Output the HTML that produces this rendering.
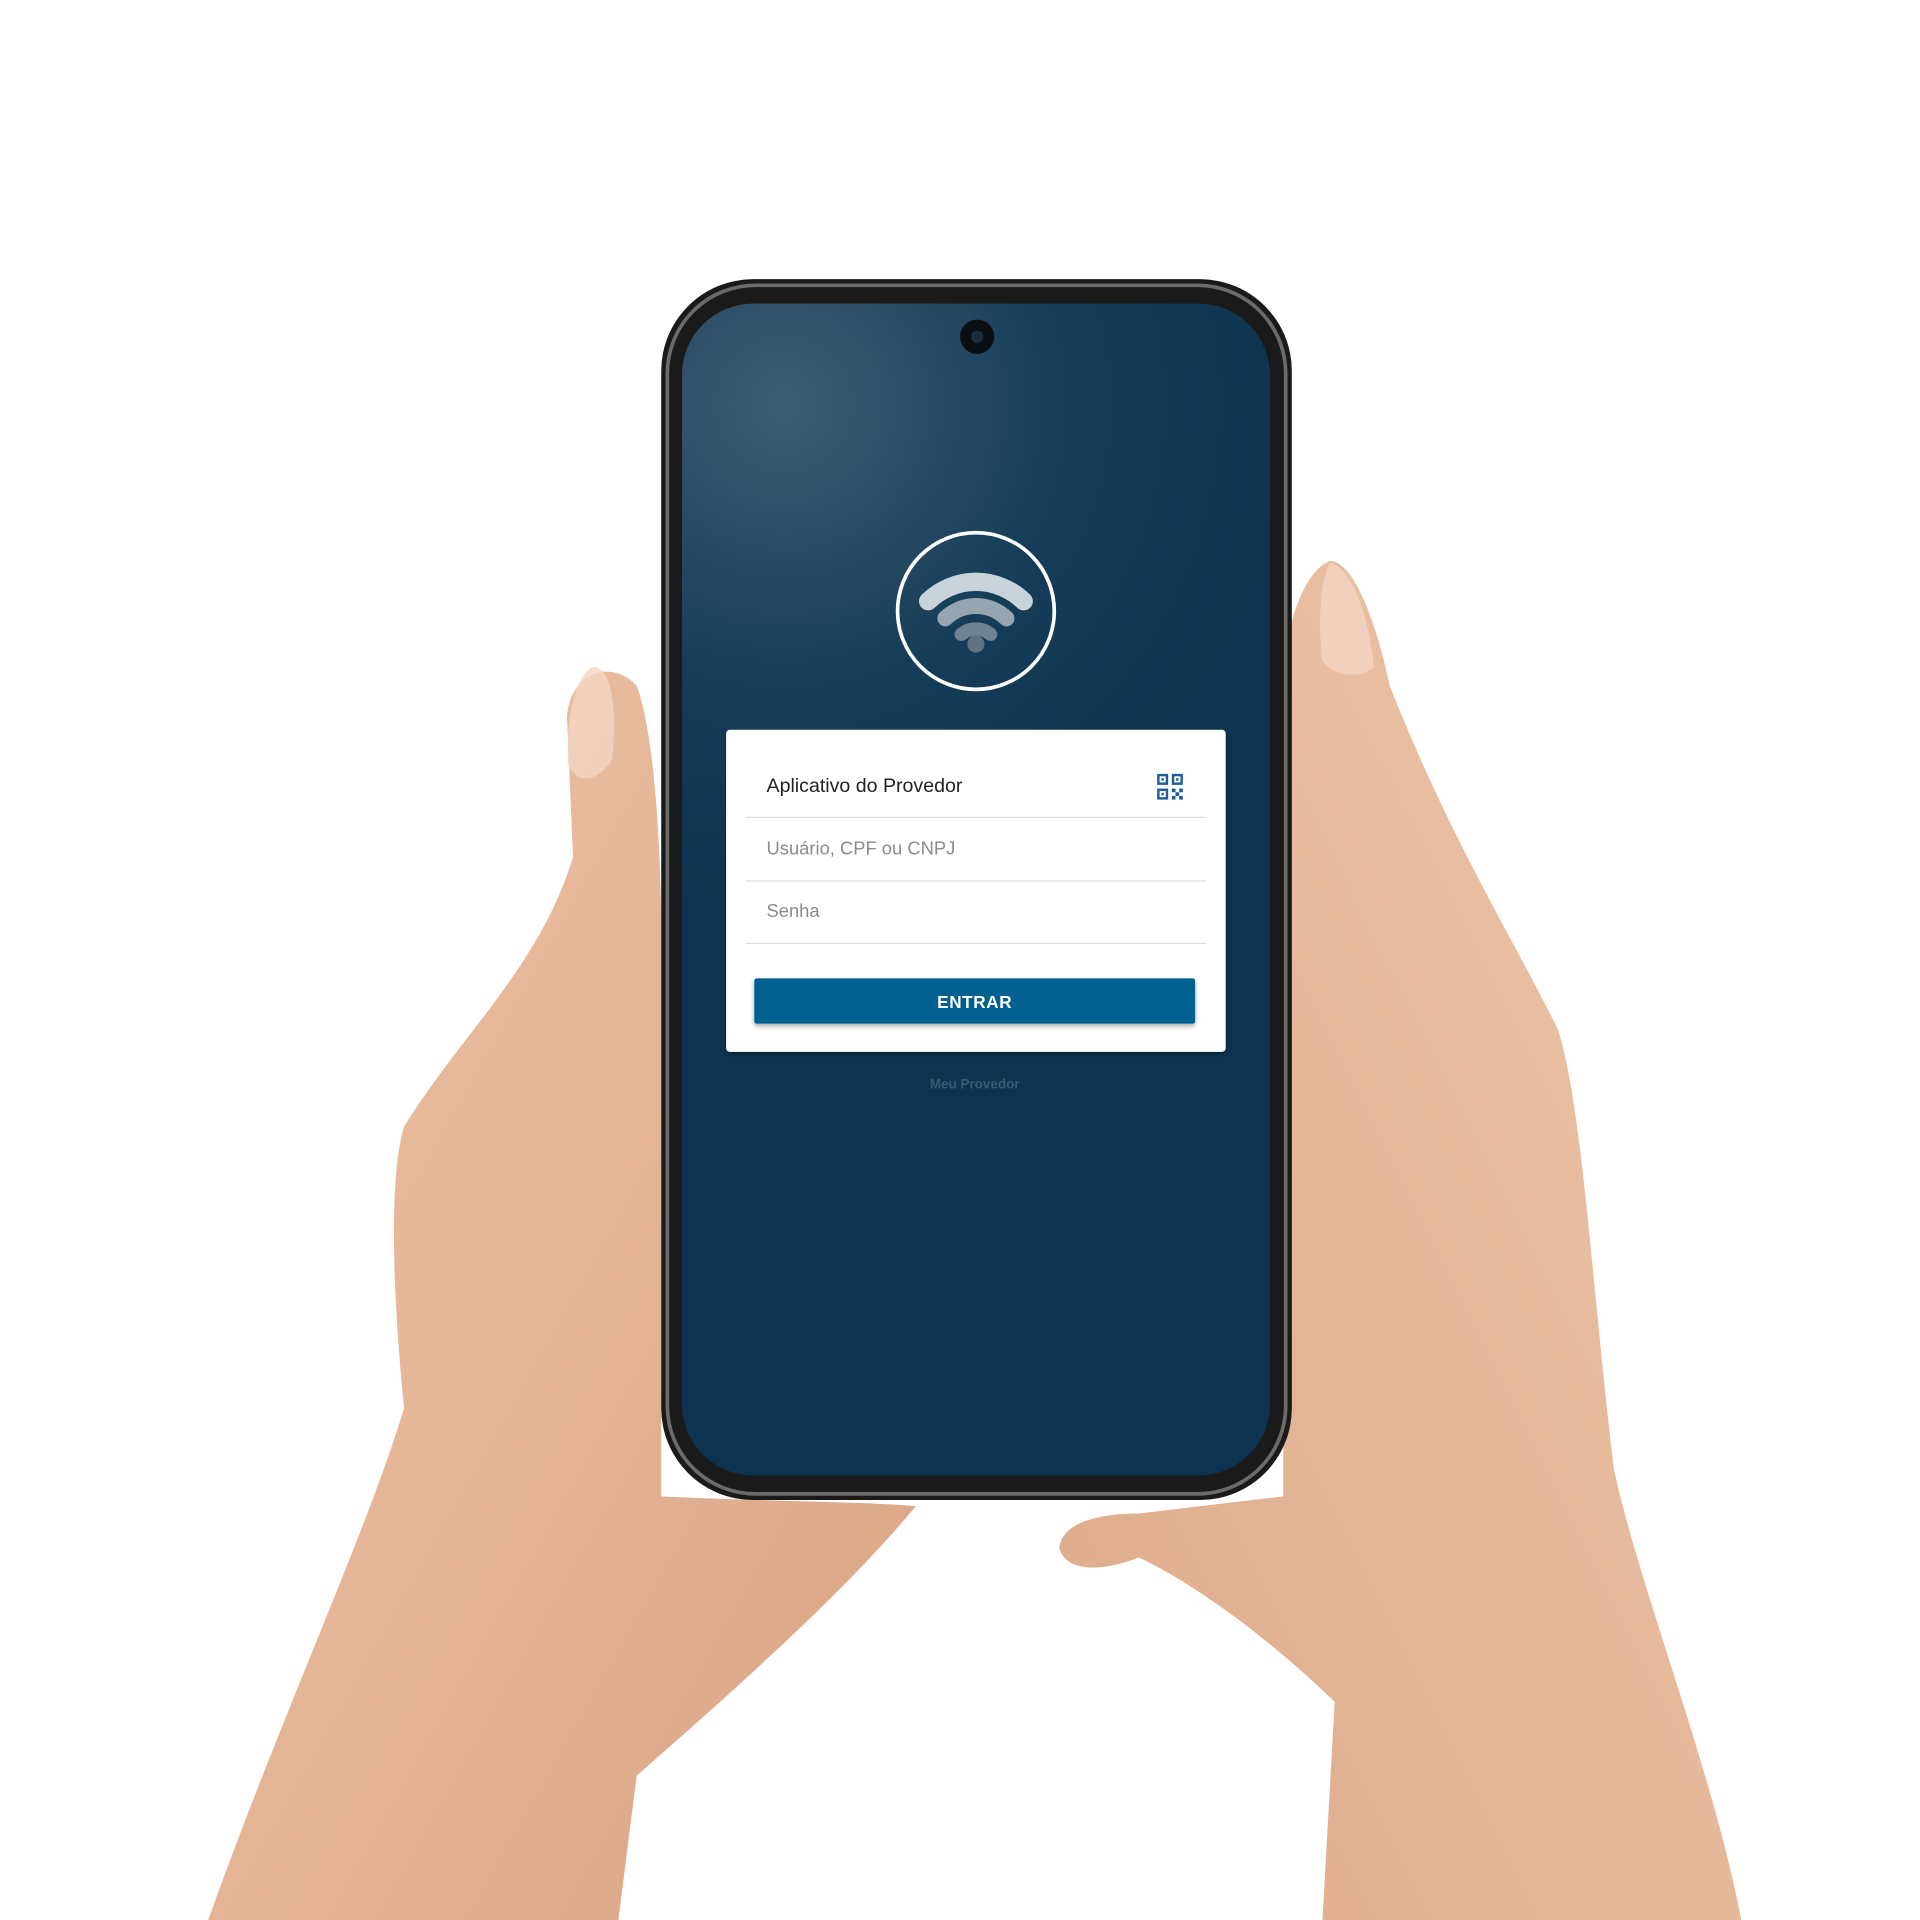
<!DOCTYPE html>
<html><head><meta charset="utf-8"><style>
html,body{margin:0;padding:0;background:#fff;width:1920px;height:1920px;overflow:hidden}
svg{display:block}
text{font-family:"Liberation Sans",sans-serif}
</style></head><body>
<svg width="1920" height="1920" viewBox="0 0 1568 1568" xmlns="http://www.w3.org/2000/svg">
<defs>
<radialGradient id="scr" cx="640" cy="330" r="420" gradientUnits="userSpaceOnUse">
<stop offset="0" stop-color="#3f5d71"/><stop offset="0.55" stop-color="#163d58"/><stop offset="1" stop-color="#0c3450"/>
</radialGradient>
<linearGradient id="skinL" x1="0" y1="0" x2="1" y2="1"><stop offset="0" stop-color="#eec3a6"/><stop offset="1" stop-color="#d9a584"/></linearGradient>
<linearGradient id="skinR" x1="1" y1="0" x2="0" y2="1"><stop offset="0" stop-color="#efc6aa"/><stop offset="1" stop-color="#dcaa8a"/></linearGradient>
<filter id="sh" x="-10%" y="-10%" width="120%" height="130%"><feDropShadow dx="0" dy="2" stdDeviation="2" flood-opacity="0.35"/></filter>
</defs>
<!-- hands -->
<path fill="url(#skinL)" d="M170 1568 C230 1400 300 1250 330 1150 C320 1050 318 960 330 920 C380 840 440 790 468 700 L463 585 C466 548 500 538 520 560 C535 600 540 700 540 760 L540 1222 C620 1226 700 1226 748 1230 C690 1300 600 1380 520 1450 L505 1568 Z"/>
<path fill="url(#skinR)" d="M1422 1568 C1400 1450 1340 1300 1318 1200 C1300 1050 1292 900 1272 840 C1232 760 1182 680 1135 560 C1122 500 1104 458 1086 458 C1062 468 1048 520 1048 560 L1048 1222 L930 1236 C900 1236 868 1242 865 1264 C870 1284 900 1284 930 1272 C990 1300 1060 1360 1090 1390 L1080 1568 Z"/>
<path fill="#f3d6c4" opacity="0.8" d="M1086 460 C1102 462 1118 500 1122 545 C1110 555 1090 552 1080 540 C1076 510 1078 475 1086 460 Z"/>
<path fill="#f3d6c4" opacity="0.8" d="M483 545 C500 542 504 580 500 620 C488 640 470 640 464 625 C462 590 468 555 483 545 Z"/>
<!-- phone -->
<rect x="540" y="228" width="515" height="997" rx="75" fill="#1a1a1a"/>
<rect x="545" y="233" width="505" height="987" rx="72" fill="none" stroke="#6b6b6b" stroke-width="3"/>
<rect x="557" y="248" width="480" height="957" rx="58" fill="url(#scr)"/>
<circle cx="798" cy="275" r="14" fill="#0a0f14"/>
<circle cx="798" cy="275" r="5" fill="#1e2d3a"/>
<!-- logo -->
<circle cx="797" cy="499" r="64" fill="none" stroke="#fff" stroke-width="3"/>
<path d="M758 491 A56 56 0 0 1 836 491" fill="none" stroke="#c9d3da" stroke-width="15" stroke-linecap="round"/>
<path d="M772 505 A36 36 0 0 1 822 505" fill="none" stroke="#95a6b2" stroke-width="13" stroke-linecap="round"/>
<path d="M785 518 A19 19 0 0 1 809 518" fill="none" stroke="#6e8393" stroke-width="11" stroke-linecap="round"/>
<circle cx="797" cy="526" r="7" fill="#5f7585"/>
<!-- card -->
<rect x="593" y="596" width="408" height="263" rx="3" fill="#fff" filter="url(#sh)"/>
<text x="626" y="647" font-size="16" fill="#222">Aplicativo do Provedor</text>
<g fill="#1f5f99">
<rect x="945" y="632" width="9" height="9"/><rect x="957" y="632" width="9" height="9"/><rect x="945" y="644" width="9" height="9"/>
<rect x="957" y="644" width="3" height="3"/><rect x="963" y="644" width="3" height="3"/><rect x="960" y="647" width="3" height="3"/><rect x="957" y="650" width="3" height="3"/><rect x="963" y="650" width="3" height="3"/>
</g>
<g fill="#fff"><rect x="947" y="634" width="5" height="5"/><rect x="959" y="634" width="5" height="5"/><rect x="947" y="646" width="5" height="5"/></g>
<g fill="#1f5f99"><rect x="948.5" y="635.5" width="2" height="2"/><rect x="960.5" y="635.5" width="2" height="2"/><rect x="948.5" y="647.5" width="2" height="2"/></g>
<rect x="609" y="667" width="376" height="1" fill="#dcdcdc"/>
<text x="626" y="698" font-size="15" fill="#8a8a8a">Usuário, CPF ou CNPJ</text>
<rect x="609" y="719" width="376" height="1" fill="#dcdcdc"/>
<text x="626" y="749" font-size="15" fill="#8a8a8a">Senha</text>
<rect x="609" y="770" width="376" height="1" fill="#dcdcdc"/>
<rect x="616" y="799" width="360" height="37" rx="2" fill="#06618f" filter="url(#sh)"/>
<text x="796" y="823" font-size="14" font-weight="bold" fill="#fff" text-anchor="middle" letter-spacing="0.5">ENTRAR</text>
<text x="796" y="889" font-size="11" font-weight="bold" fill="#3b5a70" text-anchor="middle">Meu Provedor</text>
</svg>
</body></html>
